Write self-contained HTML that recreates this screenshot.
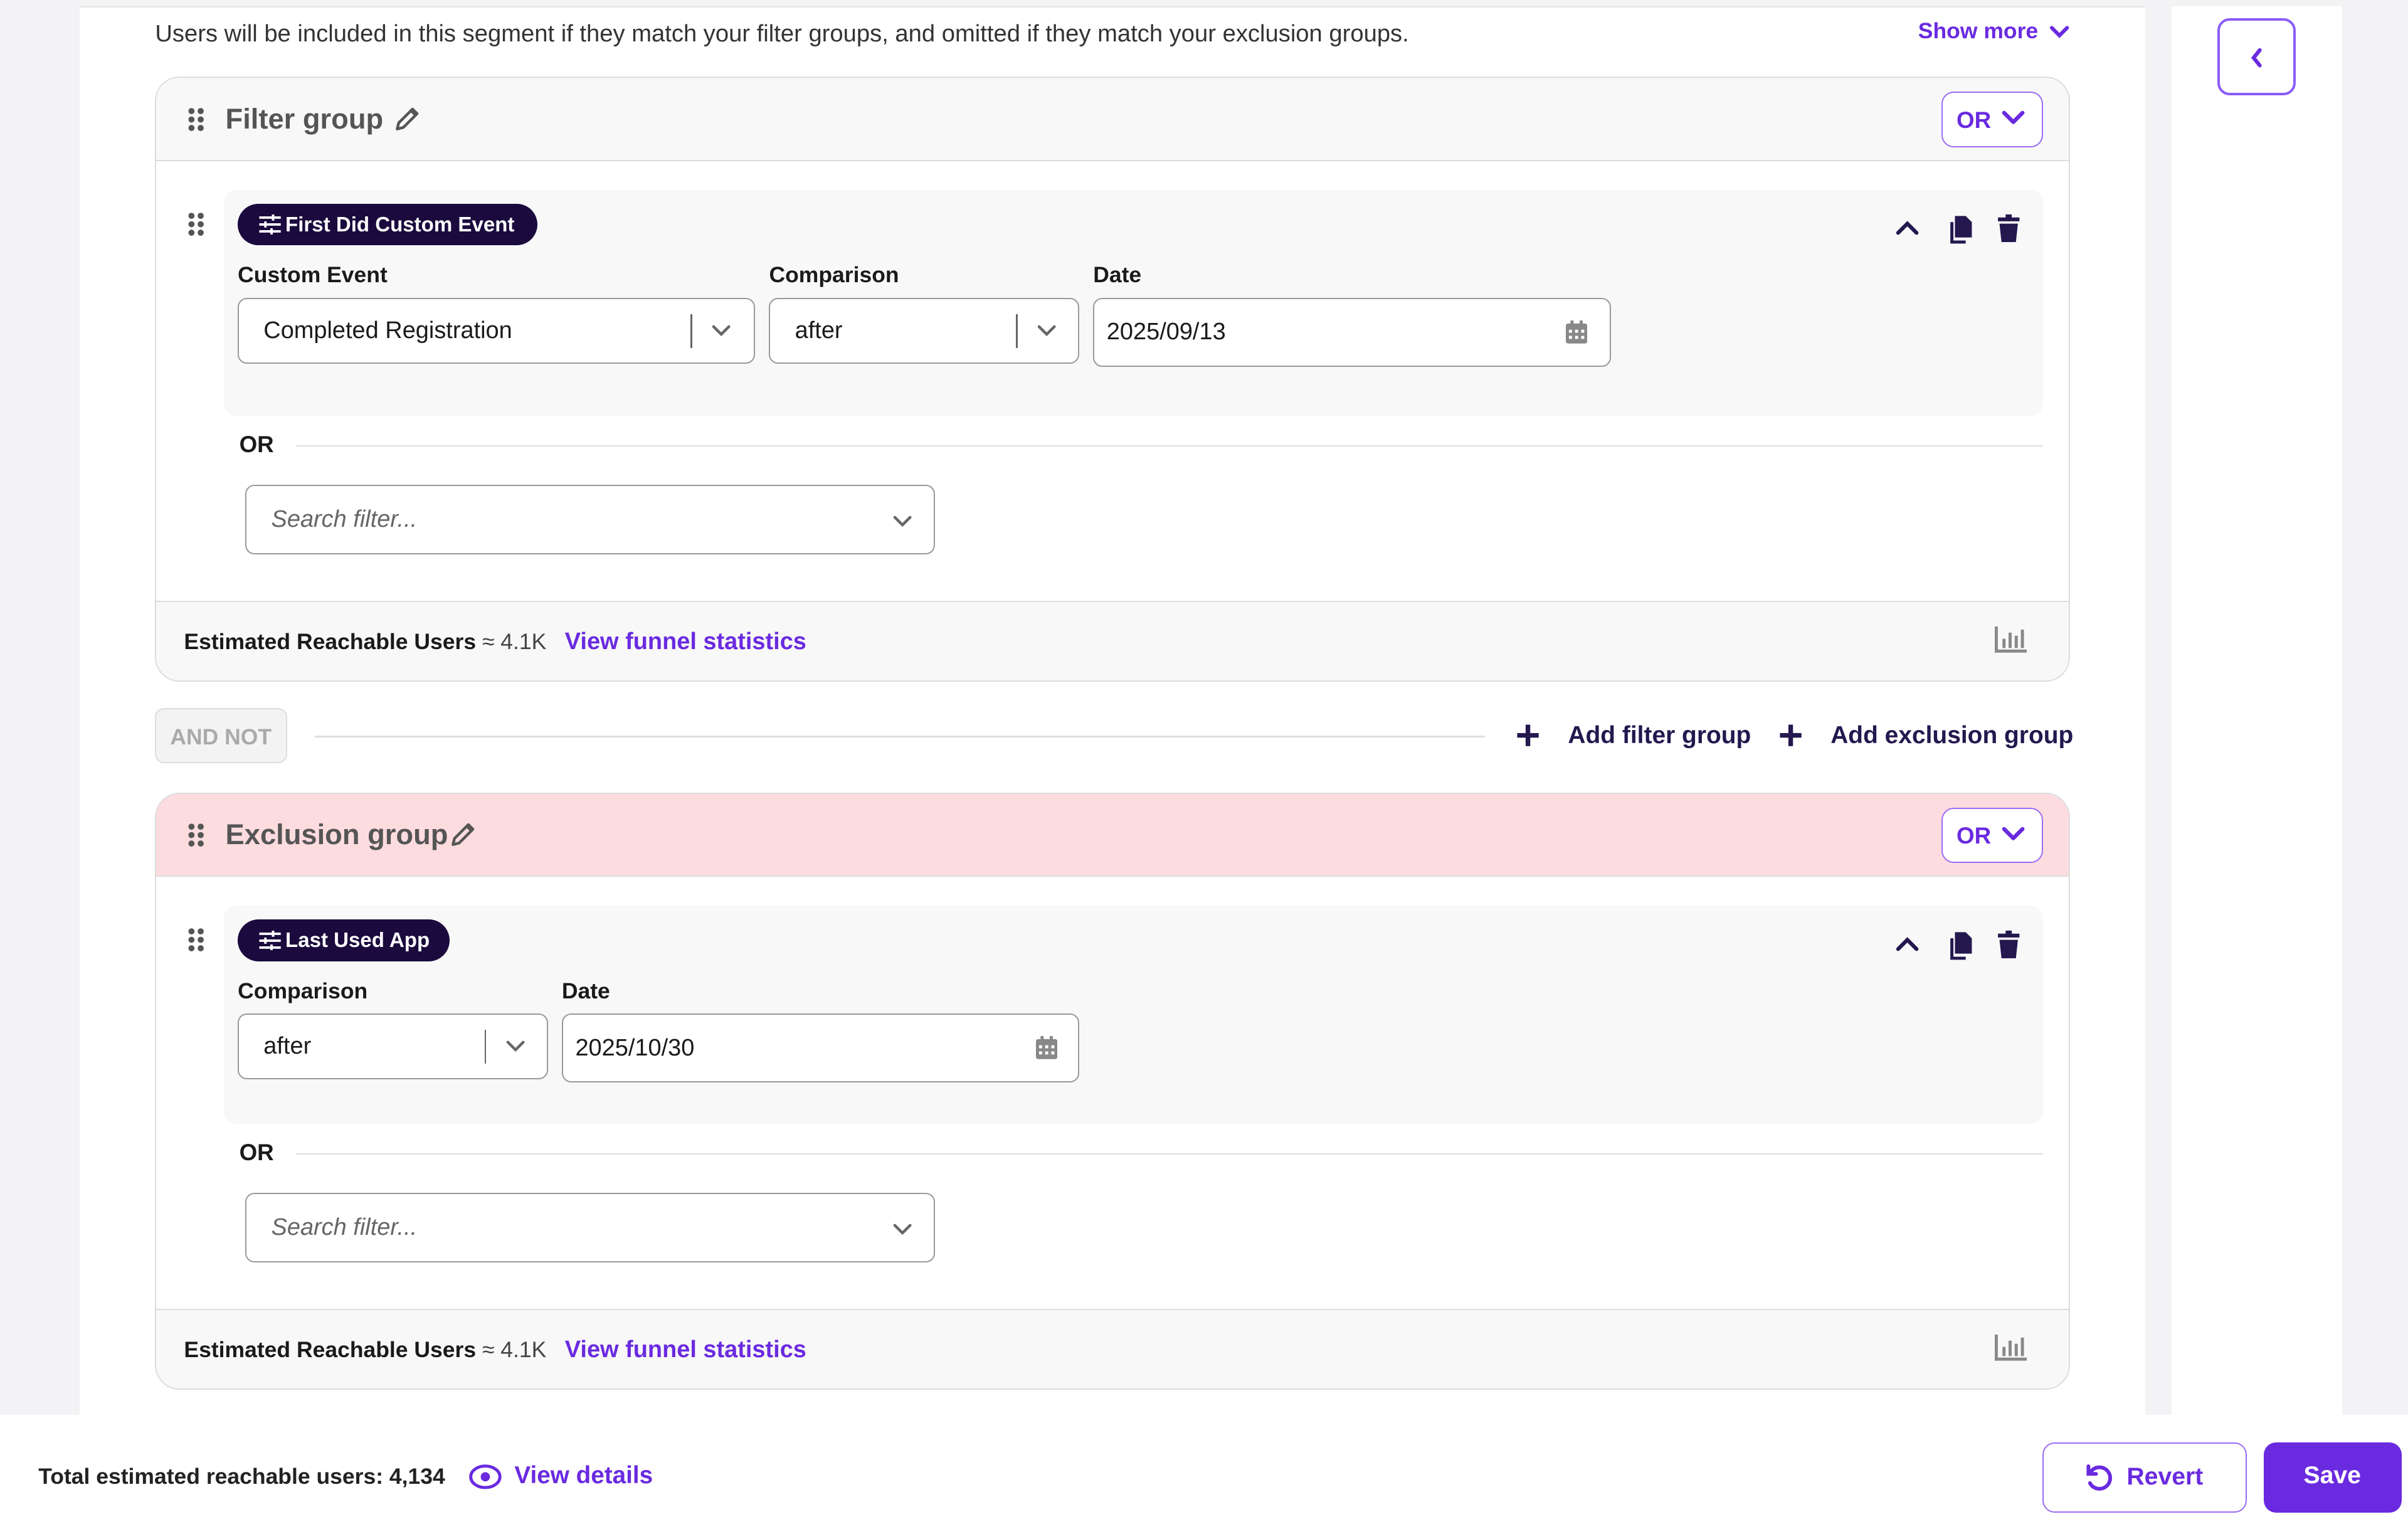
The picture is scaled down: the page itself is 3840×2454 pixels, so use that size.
<!DOCTYPE html>
<html><head><meta charset="utf-8"><style>
*{box-sizing:border-box;margin:0;padding:0}
html,body{width:3840px;height:2454px;overflow:hidden;background:#f3f3f5}
#r{zoom:2.449;width:1568px;height:1002px;position:relative;font-family:"Liberation Sans",sans-serif;color:#1a1a1a}
.a{position:absolute}
.card{position:absolute;left:101px;width:1247px;border:1px solid #dcdcdc;border-radius:16px;background:#fff;overflow:hidden}
.hd{position:absolute;left:0;top:0;right:0;height:54px;border-bottom:1px solid #dcdcdc;background:#f8f8f8}
.ft{position:absolute;left:0;bottom:0;right:0;height:52px;border-top:1px solid #dcdcdc;background:#f8f8f8}
.title{position:absolute;left:45px;top:16px;font-size:18.5px;font-weight:bold;color:#555}
.orb{position:absolute;right:17px;top:9px;width:66px;height:36px;border:1px solid #9b6cf5;border-radius:8px;background:#fff;color:#6a2ae0;font-weight:bold;font-size:15px;padding:9px 0 0 9px}
.rule{position:absolute;left:44px;right:17px;background:#f8f8f9;border-radius:8px}
.pill{position:absolute;left:9px;top:9px;height:27px;border-radius:14px;background:#1a0a3d;color:#fff;font-size:13.5px;font-weight:bold;padding:6px 13px 0 31px}
.lbl{position:absolute;font-size:14.5px;font-weight:bold}
.inp{position:absolute;height:43px;border:1px solid #999;border-radius:6px;background:#fff;font-size:15.5px;padding:12px 16px}
.sep{position:absolute;top:10px;width:1px;height:22px;background:#666}
.est{position:absolute;left:18px;top:17px;font-size:14.5px;font-weight:bold;white-space:nowrap}
.est span{font-weight:normal;color:#444}
.est b{color:#6a2ae0;margin-left:8px;font-size:15.5px}
.search{position:absolute;left:58px;width:449px;height:45px;border:1px solid #999;border-radius:6px;font-style:italic;color:#666;font-size:15.5px;padding:13px 16px}
.orl{position:absolute;left:54px;font-weight:bold;font-size:15px}
.line{position:absolute;height:1px;background:#ddd}
</style></head><body><div id="r">
<svg width="0" height="0" style="position:absolute"><defs>
<g id="dots"><g fill="#555"><circle cx="3" cy="2.5" r="2"/><circle cx="9" cy="2.5" r="2"/><circle cx="3" cy="8" r="2"/><circle cx="9" cy="8" r="2"/><circle cx="3" cy="13.5" r="2"/><circle cx="9" cy="13.5" r="2"/></g></g>
<g id="chev"><path d="M2 4l5 5 5-5" stroke="#666" stroke-width="1.8" fill="none" stroke-linecap="round"/></g>
<g id="acts" fill="#24184f"><path d="M2 14l6-6 6 6" stroke="#24184f" stroke-width="2.5" fill="none" stroke-linecap="round"/><path d="M39 3h7l4 4v10h-11z"/><path d="M36 7h2v12h8v2h-10z"/><path d="M67 4h5v-2h4v2h5v2.5h-14z"/><path d="M68 8h12l-1.3 12h-9.4z"/></g>
<g id="cal" fill="#888"><rect x="0" y="2" width="14" height="13" rx="1.5"/><rect x="3" y="0" width="2" height="3"/><rect x="9" y="0" width="2" height="3"/><g fill="#fff"><rect x="2" y="6" width="2" height="2"/><rect x="6" y="6" width="2" height="2"/><rect x="10" y="6" width="2" height="2"/><rect x="2" y="10" width="2" height="2"/><rect x="6" y="10" width="2" height="2"/><rect x="10" y="10" width="2" height="2"/></g></g>
<g id="bars" fill="#888"><rect x="0" y="0" width="2" height="17"/><rect x="0" y="15" width="21" height="2"/><rect x="5" y="8" width="2" height="6"/><rect x="9" y="4" width="2" height="10"/><rect x="13" y="6" width="2" height="8"/><rect x="17" y="2" width="2" height="12"/></g>
<g id="sl" stroke="#fff" stroke-width="1.6"><line x1="1" y1="2" x2="15" y2="2"/><line x1="1" y1="6.5" x2="15" y2="6.5"/><line x1="1" y1="11" x2="15" y2="11"/><line x1="10" y1="0" x2="10" y2="4"/><line x1="5" y1="4.5" x2="5" y2="8.5"/><line x1="9" y1="9" x2="9" y2="13"/></g>
<g id="orc"><path d="M2 2l6 6 6-6" stroke="#6a2ae0" stroke-width="2.6" fill="none" stroke-linecap="round" stroke-linejoin="round"/></g>
</defs></svg>
<div class="a" style="left:52px;top:4px;width:1345px;height:917px;background:#fff;border-top:1px solid #e4e4e4"></div>
<div class="a" style="left:1414px;top:4px;width:111px;height:917px;background:#fff"></div>
<div class="a" style="left:1444px;top:12px;width:51px;height:50px;border:2px solid #8b5cf6;border-radius:8px"><svg class="a" style="left:18px;top:17px" width="12" height="14" viewBox="0 0 12 14"><path d="M8 2L4 7l4 5" stroke="#6a2ae0" stroke-width="2.5" fill="none" stroke-linecap="round"/></svg></div>
<div class="a" style="left:101px;top:13px;font-size:15.6px;color:#333;white-space:nowrap">Users will be included in this segment if they match your filter groups, and omitted if they match your exclusion groups.</div>
<div class="a" style="left:1249px;top:12px;font-size:14.5px;font-weight:bold;color:#6a2ae0">Show more</div>
<svg class="a" style="left:1334px;top:15px" width="14" height="12"><path d="M2 3l5 5 5-5" stroke="#6a2ae0" stroke-width="2.4" fill="none" stroke-linecap="round"/></svg>

<!-- filter group -->
<div class="card" style="top:50px;height:394px">
 <div class="hd"><svg class="a" style="left:20px;top:19px" width="12" height="16"><use href="#dots"/></svg><div class="title">Filter group</div>
 <svg class="a" style="left:154px;top:18px" width="18" height="18"><path d="M3 15l1-4 9-9 3 3-9 9z M12 3l3 3" stroke="#555" stroke-width="1.8" fill="none" stroke-linejoin="round"/></svg>
 <div class="orb">OR<svg class="a" style="left:38px;top:11px" width="16" height="12"><use href="#orc"/></svg></div></div>
 <div class="rule" style="top:73px;height:147px">
  <div class="pill" style="width:195px">First Did Custom Event</div>
  <svg class="a" style="left:22px;top:16px" width="16" height="13"><use href="#sl"/></svg>
  <svg class="a" style="left:1088px;top:14px" width="84" height="22"><use href="#acts"/></svg>
  <div class="lbl" style="left:9px;top:47px">Custom Event</div><div class="lbl" style="left:355px;top:47px">Comparison</div><div class="lbl" style="left:566px;top:47px">Date</div>
  <div class="inp" style="left:9px;top:70px;width:337px">Completed Registration<div class="sep" style="left:294px"></div><svg class="a" style="left:307px;top:14px" width="14" height="12"><use href="#chev"/></svg></div>
  <div class="inp" style="left:355px;top:70px;width:202px">after<div class="sep" style="left:160px"></div><svg class="a" style="left:173px;top:14px" width="14" height="12"><use href="#chev"/></svg></div>
  <div class="inp" style="left:566px;top:70px;width:337px;height:45px;padding:13px 8px">2025/09/13<svg class="a" style="left:307px;top:14px" width="14" height="15"><use href="#cal"/></svg></div>
 </div>
 <svg class="a" style="left:20px;top:87px" width="12" height="16"><use href="#dots"/></svg>
 <div class="orl" style="top:230px">OR</div><div class="line" style="left:91px;right:17px;top:239px"></div>
 <div class="search" style="top:265px">Search filter...<svg class="a" style="left:420px;top:16px" width="14" height="12"><use href="#chev"/></svg></div>
 <div class="ft"><div class="est">Estimated Reachable Users <span>≈ 4.1K</span> <b>View funnel statistics</b></div><svg class="a" style="left:1197px;top:16px" width="21" height="17"><use href="#bars"/></svg></div>
</div>

<div class="a" style="left:101px;top:461px;width:86px;height:36px;border:1px solid #ddd;border-radius:6px;background:#f3f3f3;color:#aaa;font-weight:bold;font-size:14.5px;padding:10px 0 0 9px">AND NOT</div>
<div class="line" style="left:205px;width:762px;top:479px"></div>
<svg class="a" style="left:987px;top:471px" width="16" height="16"><path d="M8 1v14M1 8h14" stroke="#24184f" stroke-width="3"/></svg>
<div class="a" style="left:1021px;top:470px;font-size:15.9px;font-weight:bold;color:#24184f;white-space:nowrap">Add filter group</div>
<svg class="a" style="left:1158px;top:471px" width="16" height="16"><path d="M8 1v14M1 8h14" stroke="#24184f" stroke-width="3"/></svg>
<div class="a" style="left:1192px;top:470px;font-size:15.9px;font-weight:bold;color:#24184f;white-space:nowrap">Add exclusion group</div>

<!-- exclusion group -->
<div class="card" style="top:516px;height:389px">
 <div class="hd" style="background:#fddcdf"><svg class="a" style="left:20px;top:19px" width="12" height="16"><use href="#dots"/></svg><div class="title">Exclusion group</div>
 <svg class="a" style="left:190px;top:18px" width="18" height="18"><path d="M3 15l1-4 9-9 3 3-9 9z M12 3l3 3" stroke="#555" stroke-width="1.8" fill="none" stroke-linejoin="round"/></svg>
 <div class="orb">OR<svg class="a" style="left:38px;top:11px" width="16" height="12"><use href="#orc"/></svg></div></div>
 <div class="rule" style="top:73px;height:142px">
  <div class="pill" style="width:138px">Last Used App</div>
  <svg class="a" style="left:22px;top:16px" width="16" height="13"><use href="#sl"/></svg>
  <svg class="a" style="left:1088px;top:14px" width="84" height="22"><use href="#acts"/></svg>
  <div class="lbl" style="left:9px;top:47px">Comparison</div><div class="lbl" style="left:220px;top:47px">Date</div>
  <div class="inp" style="left:9px;top:70px;width:202px">after<div class="sep" style="left:160px"></div><svg class="a" style="left:173px;top:14px" width="14" height="12"><use href="#chev"/></svg></div>
  <div class="inp" style="left:220px;top:70px;width:337px;height:45px;padding:13px 8px">2025/10/30<svg class="a" style="left:308px;top:14px" width="14" height="15"><use href="#cal"/></svg></div>
 </div>
 <svg class="a" style="left:20px;top:87px" width="12" height="16"><use href="#dots"/></svg>
 <div class="orl" style="top:225px">OR</div><div class="line" style="left:91px;right:17px;top:234px"></div>
 <div class="search" style="top:260px">Search filter...<svg class="a" style="left:420px;top:16px" width="14" height="12"><use href="#chev"/></svg></div>
 <div class="ft"><div class="est">Estimated Reachable Users <span>≈ 4.1K</span> <b>View funnel statistics</b></div><svg class="a" style="left:1197px;top:16px" width="21" height="17"><use href="#bars"/></svg></div>
</div>

<!-- footer -->
<div class="a" style="left:0;top:921px;width:1568px;height:81px;background:#fff"></div>
<div class="a" style="left:25px;top:953px;font-size:14.5px;font-weight:bold;color:#222;white-space:nowrap">Total estimated reachable users: 4,134</div>
<svg class="a" style="left:305px;top:953px" width="22" height="17"><ellipse cx="11" cy="8.5" rx="9.5" ry="7" stroke="#6a2ae0" stroke-width="2" fill="none"/><circle cx="11" cy="8.5" r="3" fill="#6a2ae0"/></svg>
<div class="a" style="left:335px;top:952px;font-size:15.8px;font-weight:bold;color:#6a2ae0">View details</div>
<div class="a" style="left:1330px;top:939px;width:133px;height:46px;border:1px solid #9b6cf5;border-radius:8px;color:#6a2ae0;font-weight:bold;font-size:16px;padding:13px 0 0 54px">Revert
<svg class="a" style="left:26px;top:13px" width="20" height="20"><path d="M5 5a7 7 0 1 1-1 8" stroke="#6a2ae0" stroke-width="2.4" fill="none" stroke-linecap="round"/><path d="M3 2v5h5" stroke="#6a2ae0" stroke-width="2.4" fill="none" stroke-linecap="round"/></svg></div>
<div class="a" style="left:1474px;top:939px;width:90px;height:46px;border-radius:8px;background:#6a2ae0;color:#fff;font-weight:bold;font-size:16px;padding:13px 0 0 26px">Save</div>
</div></body></html>
